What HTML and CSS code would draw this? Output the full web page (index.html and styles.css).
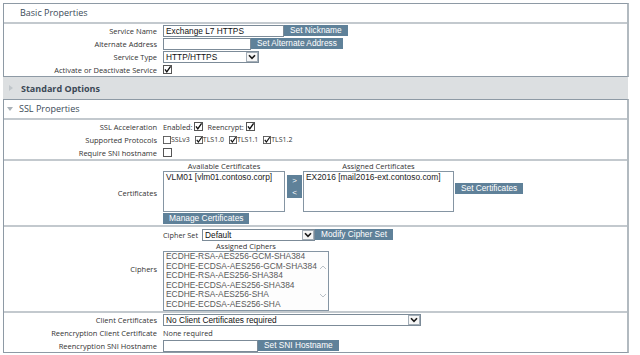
FILE: index.html
```html
<!DOCTYPE html>
<html>
<head>
<meta charset="utf-8">
<title>Service properties</title>
<link rel="stylesheet" href="styles.css">
</head>
<body>
<div class="page">
  <section class="box">
    <header class="box-head">Basic Properties</header>
    <div class="group">
      <div class="row">
        <span class="lbl">Service Name</span>
        <span class="val"><input class="inp w-name" type="text" value="Exchange L7 HTTPS"><button class="btn ml5">Set Nickname</button></span>
      </div>
      <div class="row">
        <span class="lbl">Alternate Address</span>
        <span class="val"><input class="inp w-alt" type="text" value=""><button class="btn ml5">Set Alternate Address</button></span>
      </div>
      <div class="row">
        <span class="lbl">Service Type</span>
        <span class="val"><span class="sel w-type"><span class="sel-txt">HTTP/HTTPS</span><span class="sel-arr"><svg width="8" height="6" viewBox="0 0 8 6"><path d="M1 1.2 4 4.4 7 1.2" fill="none" stroke="#1a1a1a" stroke-width="1.6"/></svg></span></span></span>
      </div>
      <div class="row">
        <span class="lbl">Activate or Deactivate Service</span>
        <span class="val"><svg class="cb" viewBox="0 0 9 9"><rect x=".5" y=".5" width="8" height="8" fill="#fff" stroke="#555"/><path d="M2 4.4 3.8 6.8 7.6 1.4" fill="none" stroke="#111" stroke-width="1.4"/></svg></span>
      </div>
    </div>
  </section>

  <div class="bar"><span class="tri-r"></span>Standard Options</div>

  <section class="box">
    <header class="box-head with-tri"><span class="tri-d"></span>SSL Properties</header>
    <div class="group">
      <div class="row">
        <span class="lbl">SSL Acceleration</span>
        <span class="val small">Enabled:<svg class="cb ml2" viewBox="0 0 9 9"><rect x=".5" y=".5" width="8" height="8" fill="#fff" stroke="#555"/><path d="M2 4.4 3.8 6.8 7.6 1.4" fill="none" stroke="#111" stroke-width="1.4"/></svg><span class="ml4">Reencrypt:</span><svg class="cb ml2" viewBox="0 0 9 9"><rect x=".5" y=".5" width="8" height="8" fill="#fff" stroke="#555"/><path d="M2 4.4 3.8 6.8 7.6 1.4" fill="none" stroke="#111" stroke-width="1.4"/></svg></span>
      </div>
      <div class="row">
        <span class="lbl">Supported Protocols</span>
        <span class="val small proto">
          <span class="pitem"><svg class="cb sm" viewBox="0 0 9 9"><rect x=".5" y=".5" width="8" height="8" fill="#fff" stroke="#555"/></svg>SSLv3</span>
          <span class="pitem"><svg class="cb sm" viewBox="0 0 9 9"><rect x=".5" y=".5" width="8" height="8" fill="#fff" stroke="#555"/><path d="M2 4.4 3.8 6.8 7.6 1.4" fill="none" stroke="#111" stroke-width="1.4"/></svg>TLS1.0</span>
          <span class="pitem"><svg class="cb sm" viewBox="0 0 9 9"><rect x=".5" y=".5" width="8" height="8" fill="#fff" stroke="#555"/><path d="M2 4.4 3.8 6.8 7.6 1.4" fill="none" stroke="#111" stroke-width="1.4"/></svg>TLS1.1</span>
          <span class="pitem"><svg class="cb sm" viewBox="0 0 9 9"><rect x=".5" y=".5" width="8" height="8" fill="#fff" stroke="#555"/><path d="M2 4.4 3.8 6.8 7.6 1.4" fill="none" stroke="#111" stroke-width="1.4"/></svg>TLS1.2</span>
        </span>
      </div>
      <div class="row">
        <span class="lbl">Require SNI hostname</span>
        <span class="val"><svg class="cb" viewBox="0 0 9 9"><rect x=".5" y=".5" width="8" height="8" fill="#fff" stroke="#555"/></svg></span>
      </div>
    </div>

    <div class="group row-block certs-group">
      <span class="lbl">Certificates</span>
      <div class="val-block">
        <div class="certs">
          <div class="listcol w-avail">
            <div class="cap">Available Certificates</div>
            <div class="list h-cert"><div class="opt">VLM01 [vlm01.contoso.corp]</div></div>
          </div>
          <div class="arrows"><button class="btn arr">&gt;</button><button class="btn arr">&lt;</button></div>
          <div class="listcol w-assigned">
            <div class="cap">Assigned Certificates</div>
            <div class="list h-cert"><div class="opt">EX2016 [mail2016-ext.contoso.com]</div></div>
          </div>
          <button class="btn set-certs">Set Certificates</button>
        </div>
        <button class="btn manage">Manage Certificates</button>
      </div>
    </div>

    <div class="group row-block ciphers-group">
      <span class="lbl">Ciphers</span>
      <div class="val-block">
        <div class="cipher-set">
          <span class="small">Cipher Set</span>
          <span class="sel w-cset ml4"><span class="sel-txt">Default</span><span class="sel-arr"><svg width="8" height="6" viewBox="0 0 8 6"><path d="M1 1.2 4 4.4 7 1.2" fill="none" stroke="#1a1a1a" stroke-width="1.6"/></svg></span></span>
          <button class="btn ml2">Modify Cipher Set</button>
        </div>
        <div class="listcol w-ciphers">
          <div class="cap cap-c">Assigned Ciphers</div>
          <div class="list h-ciph ciphers">
            <div class="opts">
              <div class="opt">ECDHE-RSA-AES256-GCM-SHA384</div>
              <div class="opt">ECDHE-ECDSA-AES256-GCM-SHA384</div>
              <div class="opt">ECDHE-RSA-AES256-SHA384</div>
              <div class="opt">ECDHE-ECDSA-AES256-SHA384</div>
              <div class="opt">ECDHE-RSA-AES256-SHA</div>
              <div class="opt">ECDHE-ECDSA-AES256-SHA</div>
            </div>
            <div class="scroll">
              <svg width="8" height="5" viewBox="0 0 8 5"><path d="M1 4 4 1 7 4" fill="none" stroke="#b9c0c6" stroke-width="1"/></svg>
              <svg width="8" height="5" viewBox="0 0 8 5"><path d="M1 1 4 4 7 1" fill="none" stroke="#b9c0c6" stroke-width="1"/></svg>
            </div>
          </div>
        </div>
      </div>
    </div>

    <div class="group">
      <div class="row">
        <span class="lbl">Client Certificates</span>
        <span class="val"><span class="sel w-client"><span class="sel-txt">No Client Certificates required</span><span class="sel-arr"><svg width="8" height="6" viewBox="0 0 8 6"><path d="M1 1.2 4 4.4 7 1.2" fill="none" stroke="#1a1a1a" stroke-width="1.6"/></svg></span></span></span>
      </div>
      <div class="row">
        <span class="lbl">Reencryption Client Certificate</span>
        <span class="val small">None required</span>
      </div>
      <div class="row">
        <span class="lbl">Reencryption SNI Hostname</span>
        <span class="val"><input class="inp w-sni" type="text" value=""><button class="btn ml4">Set SNI Hostname</button></span>
      </div>
    </div>
  </section>
</div>
</body>
</html>
```

FILE: styles.css
```css
* { box-sizing: border-box; }
html, body { margin: 0; background: #fff; }
body { font-family: "Open Sans", "DejaVu Sans", sans-serif; color: #333; }

.page { padding: 3px 11px 0 3px; }

.box {
  border: 1px solid #8e9aa5;
  border-right: 2px solid #b2bac0;
  background: #fff;
}

.box-head {
  height: 20px;
  line-height: 18px;
  padding-left: 16px;
  font-size: 9px;
  color: #3b4a57;
  border-bottom: 2px solid #c3c9ce;
}
.box-head.with-tri { padding-left: 3px; display: flex; align-items: center; }

.tri-d {
  width: 0; height: 0;
  border-left: 3.5px solid transparent;
  border-right: 3.5px solid transparent;
  border-top: 4px solid #a9b1b8;
  margin-right: 6px;
}

.bar {
  height: 22px;
  display: flex;
  align-items: center;
  padding-left: 6px;
  margin-right: 1px;
  background: #dcdfe1;
  font-size: 9px;
  font-weight: 700;
  color: #3b4855;
}
.tri-r {
  width: 0; height: 0;
  border-top: 3.5px solid transparent;
  border-bottom: 3.5px solid transparent;
  border-left: 4px solid #c0c6cb;
  margin-right: 8px;
}

.group + .group { border-top: 2px solid #c3c9ce; }

.row {
  display: grid;
  grid-template-columns: 159px 1fr;
  align-items: center;
  height: 13px;
}
.row-block {
  display: grid;
  grid-template-columns: 159px 1fr;
  align-items: center;
}

.lbl {
  text-align: right;
  padding-right: 6px;
  font-size: 7.5px;
  color: #333;
  white-space: nowrap;
}

.val { display: flex; align-items: center; white-space: nowrap; }
.small { font-size: 7.3px; color: #333; }

.ml2 { margin-left: 2px; }
.ml4 { margin-left: 4px; }
.ml5 { margin-left: 5px; }

.inp {
  height: 12px;
  margin: 0;
  padding: 0 2px;
  border: 1px solid #7c8b98;
  background: #fff;
  font: 8.3px "Liberation Sans", Arial, sans-serif;
  color: #111;
  outline: none;
}
.w-name { width: 121px; }
.w-alt { width: 88px; }
.w-sni { width: 95px; }

.btn {
  height: 11px;
  margin: 0;
  padding: 0 6px;
  border: 0;
  background: #5f8199;
  color: #fff;
  font: 8.3px/11px "Liberation Sans", Arial, sans-serif;
  white-space: nowrap;
}

.sel {
  display: flex;
  height: 12px;
  border: 1px solid #7c8b98;
  background: #fff;
  font: 8.3px/10px "Liberation Sans", Arial, sans-serif;
  color: #111;
}
.sel-txt { flex: 1; padding-left: 2px; overflow: hidden; white-space: nowrap; }
.sel-arr {
  width: 12px;
  display: flex;
  align-items: center;
  justify-content: center;
  border: 1px solid #a4aeb7;
  background: #f6f6f6;
}
.w-type { width: 96px; }
.w-cset { width: 113px; }
.w-client { width: 258px; }

.cb { width: 9px; height: 9px; display: block; flex: none; }
.cb.sm { width: 8px; height: 8px; }

.proto { gap: 5px; font-size: 7px; }
.pitem { display: flex; align-items: center; }

/* certificates */
.certs-group { height: 66px; }
.val-block { display: flex; flex-direction: column; align-items: flex-start; }
.certs { display: flex; align-items: flex-start; }
.listcol { display: flex; flex-direction: column; }
.cap {
  height: 9px;
  line-height: 9px;
  font-size: 7.5px;
  text-align: center;
  color: #333;
}
.w-avail { width: 122px; }
.w-assigned { width: 151px; margin-left: 1px; }
.list {
  border: 1px solid #8595a3;
  background: #fff;
  font: 8.4px/10px "Liberation Sans", Arial, sans-serif;
  color: #222;
  padding: 0 2px;
}
.h-cert { height: 41px; }
.opt { white-space: nowrap; }

.arrows {
  display: flex;
  flex-direction: column;
  margin: 13px 0 0 2px;
}
.btn.arr { width: 15px; height: 11.5px; padding: 0; line-height: 11px; font-size: 8px; }
.set-certs { margin: 21px 0 0 1px; }
.manage { margin-top: 1px; font-size: 8.4px; }

/* ciphers */
.ciphers-group { height: 86px; }
.cipher-set { display: flex; align-items: center; height: 12px; margin-top: 1px; }
.w-ciphers { width: 166px; }
.cap-c { height: 10px; line-height: 10px; }
.h-ciph { height: 60px; }
.ciphers { display: flex; color: #5a5a5a; background: #fdfdfd; padding-right: 1px; line-height: 9.5px; }
.opts { flex: 1; overflow: hidden; padding-top: 0.5px; }
.scroll {
  width: 9px;
  display: flex;
  flex-direction: column;
  justify-content: space-between;
  align-items: center;
  padding: 13px 0 12px;
}
```
